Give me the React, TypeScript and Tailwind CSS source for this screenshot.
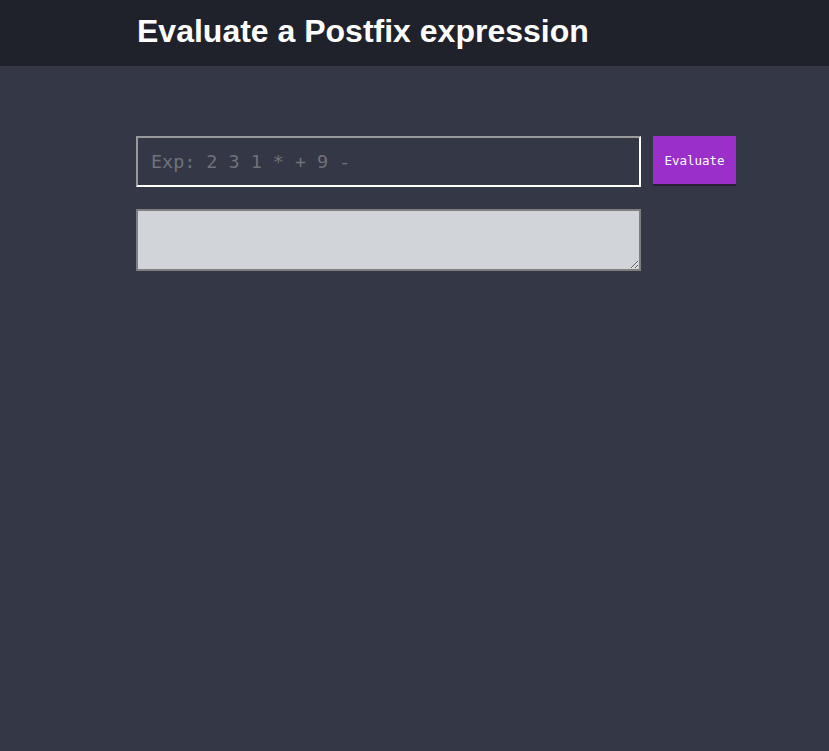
import React from "react";

const App = () => {
  return (
    <div className="min-h-[751px] bg-[#343746] font-['Liberation_Sans',Arial,sans-serif]">
      {/* Header */}
      <header className="h-[66px] bg-[#20222b]">
        <h1 className="pl-[137px] pt-[12px] text-[32px] font-bold leading-[38px] text-white">
          Evaluate a Postfix expression
        </h1>
      </header>

      {/* Form */}
      <div className="pl-[136px] pt-[70px]">
        <div className="flex items-start gap-[12px]">
          <input
            type="text"
            placeholder="Exp: 2 3 1 * + 9 -"
            className="h-[51px] w-[505px] border-2 border-t-[#9a9a9a] border-l-[#9a9a9a] border-b-white border-r-white bg-transparent px-[13px] font-['DejaVu_Sans_Mono',monospace] text-[18.4px] text-white outline-none placeholder:text-[#70727a]"
          />
          <button className="h-[48px] w-[83px] pt-[2px] bg-[#9a2fc9] font-['DejaVu_Sans_Mono',monospace] text-[12.5px] text-white shadow-[0_2px_0_#2a1e38]">
            Evaluate
          </button>
        </div>
        <textarea
          readOnly
          className="mt-[22px] block h-[62px] w-[505px] border-2 border-[#7f7f7f] bg-[#d1d4d8] outline-none"
        />
      </div>
    </div>
  );
};

export default App;
